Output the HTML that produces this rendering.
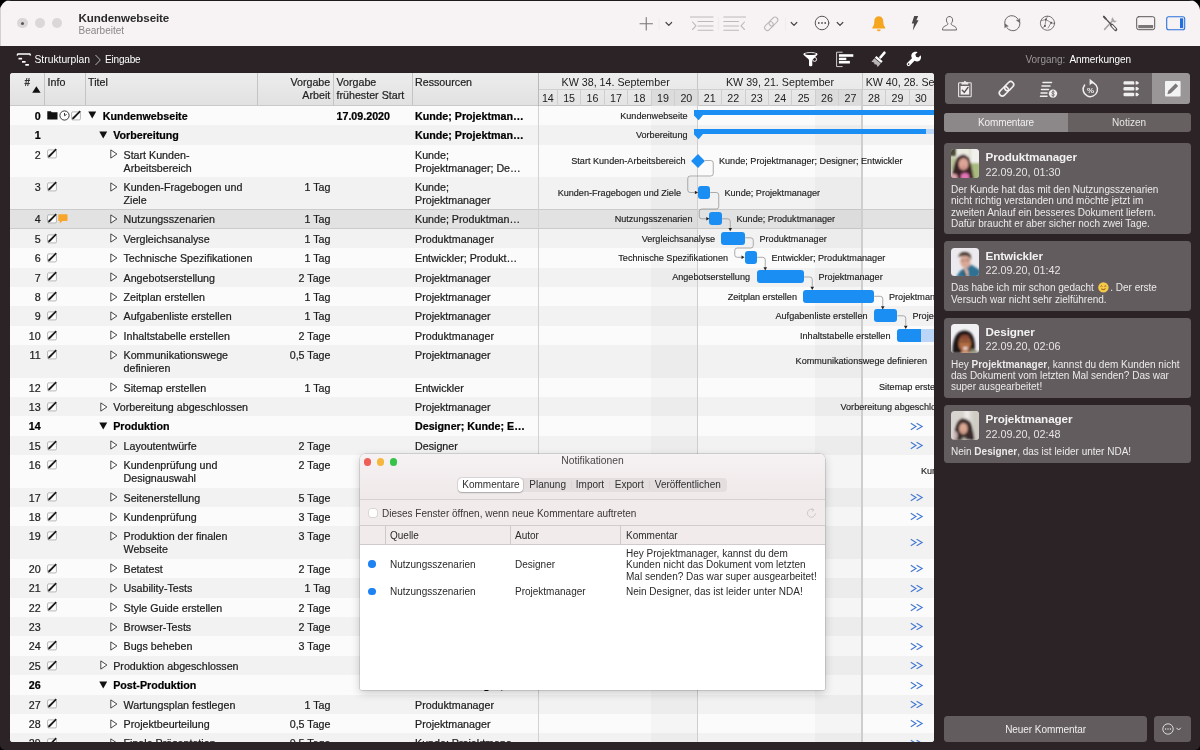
<!DOCTYPE html>
<html><head><meta charset="utf-8"><title>Kundenwebseite</title>
<style>
*{box-sizing:border-box;margin:0;padding:0}
html,body{width:1200px;height:750px;overflow:hidden;background:#000}
body{font-family:"Liberation Sans",sans-serif;position:relative}
.win{position:absolute;left:0;top:0;width:1200px;height:750px;border-radius:11px 11px 5px 5px;overflow:hidden;background:#2b2326;will-change:transform}
.titlebar{position:absolute;left:0;top:0;width:1200px;height:45.9px;background:#f7f2f3;box-shadow:inset 0 1px 0 #1c1a1b, inset 1px 0 0 #d4cfd0}
.tl{position:absolute;top:18.1px;width:10.4px;height:10.4px;border-radius:50%;background:#dbd6d7}
.wtitle{position:absolute;left:78.5px;top:11px;font-size:11.6px;font-weight:700;color:#2a2a2a;letter-spacing:-0.1px}
.wsub{position:absolute;left:78.5px;top:25px;font-size:10px;color:#8b8688}
.ab{position:absolute}
.darkbar{position:absolute;left:0;top:46px;width:1200px;height:27px;background:#2b2326;color:#fff;font-size:10.3px}
.darkbar span{position:absolute;top:7.7px;white-space:nowrap}
/* table */
.table{position:absolute;left:10px;top:73px;width:924.2px;height:668.8px;background:#fbfbfb;overflow:hidden;border-radius:3px}
.thead{position:absolute;left:0;top:0;width:528.75px;height:32.8px;background:linear-gradient(#ededed,#e1e1e1);border-bottom:1px solid #c9c9c9;font-size:10.7px;color:#222}
.thead span{position:absolute;-webkit-text-stroke:0.2px currentColor;top:3px;line-height:13px;white-space:nowrap}
.thead i{position:absolute;top:0;width:1px;height:32px;background:#c4c4c4}
.row{position:absolute;left:0;width:924px;font-size:10.7px;color:#1d1d1d;background:#fbfbfb}
.row.odd{background:#f2f2f2}
.row.sel{background:#e2e2e2;border-top:1px solid #cbcbcb;border-bottom:1px solid #cbcbcb}
.row.b{font-weight:700;color:#000}
.row span{position:absolute;top:4px;-webkit-text-stroke:0.22px currentColor;line-height:13px;white-space:nowrap}
.row.sel span{top:3px}
.row.sel .ic{margin-top:-1px}
.row .num{right:893.3px;text-align:right}
.row .wk{right:603.5px;text-align:right}
.row .st{left:326.5px}
.row .rs{left:405px}
.ic{position:absolute}
.gantt{position:absolute;left:528.75px;top:0;width:395.25px;height:669px;overflow:hidden}
.gsep{position:absolute;left:528.25px;top:0;width:1px;height:669px;background:linear-gradient(#b9b9b9 0,#b9b9b9 33px,#d2d2d2 33px)}
.wkd{position:absolute;top:32.8px;height:640px;background:rgba(0,0,0,0.024)}
.wkl{position:absolute;top:16px;height:660px;width:1.3px;background:#cecece}
.ghead{position:absolute;left:0;top:0;width:396px;height:32.8px;background:linear-gradient(#eeeeee,#e4e4e4);border-bottom:1px solid #c4c4c4}
.week{position:absolute;top:0;height:16px;font-size:10.7px;color:#222;text-align:center;line-height:18.3px;border-left:1px solid #c6c6c6;white-space:nowrap;overflow:hidden}
.day{position:absolute;top:16px;height:16.5px;font-size:10.7px;color:#222;text-align:center;line-height:17px;border-left:1px solid #cfcfcf;border-top:1px solid #cfcfcf}
.day.we{background:#dcdcdc}
.bar{position:absolute;height:13px;background:#1a8ef2;border-radius:3px}
.sb{position:absolute;height:5.3px;background:#1a8ef2}
.gl{position:absolute;-webkit-text-stroke:0.15px currentColor;font-size:9.1px;color:#1d1d1d;white-space:nowrap;line-height:12px}
/* right panel */
.panel{position:absolute;left:934px;top:73px;width:266px;height:677px;color:#fff}
.ibar{position:absolute;left:10.7px;top:0;width:245px;height:31px;background:#686264;border-radius:3.5px;overflow:hidden}
.ibar .selx{position:absolute;left:207.3px;top:0;width:39px;height:31px;background:#9a9697}
.tabs{position:absolute;left:10.3px;top:40px;width:246.4px;height:19px;background:#666061;border-radius:3px;overflow:hidden;font-size:10px;color:#e8e6e6}
.tabs div{position:absolute;top:0;height:19px;line-height:20.3px;text-align:center}
.card{position:absolute;left:10px;width:246.7px;background:#625c5e;border-radius:3.5px}
.card .nm{position:absolute;left:41.5px;top:7.4px;font-size:11.7px;font-weight:700;color:#f3f2f2;white-space:nowrap;letter-spacing:-0.1px}
.card .dt{position:absolute;left:41.5px;top:22.9px;font-size:10.8px;color:#e6e4e4;white-space:nowrap}
.card .bd{position:absolute;left:7px;top:41.1px;font-size:10px;color:#eceaea;white-space:nowrap}
.card .bd .l{height:11.4px;line-height:11.4px}
.card .av{position:absolute;left:6.9px;top:6.4px;width:28px;height:28.7px;border-radius:3.5px;overflow:hidden}
.card .av svg{display:block}
.btn{position:absolute;background:#625c5e;border-radius:3.5px;color:#f0eeee;font-size:10.3px;text-align:center}
/* notif window */
.nwin{position:absolute;left:360px;top:453.5px;width:465px;height:236px;background:#fff;border-radius:5px 5px 1.5px 1.5px;box-shadow:0 0 0 0.5px rgba(0,0,0,0.22),0 3px 10px rgba(0,0,0,0.2);overflow:hidden;font-size:10px;color:#2a2a2a}
.ntop{position:absolute;left:0;top:0;width:465px;height:46px;background:linear-gradient(#f6f1f2,#efe9ea);border-bottom:1px solid #d6d0d1}
.nchk{position:absolute;left:0;top:46px;width:465px;height:26px;background:#f1ebec;border-bottom:1px solid #d2cccd}
.nhd{position:absolute;left:0;top:72px;width:465px;height:19.4px;background:#f1ebec;border-bottom:1px solid #d0cacb}
.nhd span,.nrow span{position:absolute;white-space:nowrap}
.nhd i{position:absolute;top:0;width:1px;height:18.6px;background:#cfc9ca}
.seg{position:absolute;left:98.3px;top:24px;width:268.5px;height:14.3px;background:#e4dedf;border-radius:4px}
.seg span{position:absolute;top:0;line-height:14.6px;font-size:10px;color:#2f2f2f;white-space:nowrap}
.seg .on{position:absolute;left:0;top:0;width:65.2px;height:14.3px;background:#fff;border-radius:4px;box-shadow:0 0 0 0.5px rgba(0,0,0,0.12),0 0.5px 1.5px rgba(0,0,0,0.25)}
.nl{height:11.2px;line-height:11.2px}
.seg i{position:absolute;top:3px;width:1px;height:8.5px;background:#dad4d5}
</style></head><body>
<div class="win">
<!-- TITLE BAR -->
<div class="titlebar">
 <div class="tl" style="left:17.3px"></div><div class="tl" style="left:34.5px"></div><div class="tl" style="left:51.5px"></div>
 <div class="ab" style="left:20.9px;top:21.7px;width:3.2px;height:3.2px;border-radius:50%;background:#5a5657"></div>
 <div class="wtitle">Kundenwebseite</div>
 <div class="wsub">Bearbeitet</div>
 <svg class="ab" style="left:630px;top:8px" width="570" height="32" viewBox="630 8 570 32" fill="none" stroke-linecap="round" stroke-linejoin="round">
  <!-- plus -->
  <path d="M640 23.7 H652.5 M646.25 17.5 V30" stroke="#7a7677" stroke-width="1.1"/>
  <path d="M659 18 V30" stroke="#f0eaeb" stroke-width="1"/>
  <path d="M666 22.5 L668.8 25.3 L671.6 22.5" stroke="#4a4647" stroke-width="1.2"/>
  <!-- indent -->
  <g stroke="#bdb8b9" stroke-width="1.1">
   <path d="M690.5 17 H713 M698 21.5 H713 M698 26 H713 M698 30.3 H713 M692.5 22 L696 25.8 L692.5 29.5"/>
   <path d="M718.5 18 V30" stroke="#f0eaeb"/>
   <path d="M723.8 17 H745.5 M723.8 21.5 H738.5 M723.8 26 H738.5 M723.8 30.3 H738.5 M744.5 22 L741 25.8 L744.5 29.5"/>
  </g>
  <!-- link disabled -->
  <g stroke="#bdb8b9" stroke-width="1.1" transform="rotate(-45 771.2 23.8)">
   <rect x="763" y="21" width="10" height="5.6" rx="2.8"/>
   <rect x="769.4" y="21" width="10" height="5.6" rx="2.8"/>
  </g>
  <path d="M785.5 18 V30" stroke="#f0eaeb" stroke-width="1"/>
  <path d="M791.2 22.5 L794 25.3 L796.8 22.5" stroke="#4a4647" stroke-width="1.2"/>
  <!-- ellipsis circle -->
  <circle cx="822" cy="23" r="6.8" stroke="#5a5657" stroke-width="1"/>
  <circle cx="818.8" cy="23" r="0.9" fill="#5a5657" stroke="none"/><circle cx="822" cy="23" r="0.9" fill="#5a5657" stroke="none"/><circle cx="825.2" cy="23" r="0.9" fill="#5a5657" stroke="none"/>
  <path d="M837.2 22.5 L840 25.3 L842.8 22.5" stroke="#4a4647" stroke-width="1.2"/>
  <!-- bell -->
  <path d="M878.8 16.3 C875.2 16.3 874.3 19.5 874.3 22 C874.3 25.2 873.2 26.3 872.4 27.4 V28.4 H885.2 V27.4 C884.4 26.3 883.3 25.2 883.3 22 C883.3 19.5 882.4 16.3 878.8 16.3Z" fill="#f6a51f" stroke="none"/>
  <path d="M876.9 29.4 A1.9 1.9 0 0 0 880.7 29.4Z" fill="#f6a51f" stroke="none"/>
  <!-- bolt -->
  <path d="M914.2 16 H918.2 L916.4 20.3 H918.6 L912.8 30.4 L914 23.6 H911.8Z" fill="#4b4748" stroke="none"/>
  <!-- person -->
  <path d="M949.5 16.5 C947.4 16.5 946.4 18.1 946.4 19.9 C946.4 21.6 947.1 22.6 947.8 23.3 C948.2 24.6 946.9 25.3 945.4 25.9 C943.4 26.7 942.5 27.6 942.5 30 H956.5 C956.5 27.6 955.6 26.7 953.6 25.9 C952.1 25.3 950.8 24.6 951.2 23.3 C951.9 22.6 952.6 21.6 952.6 19.9 C952.6 18.1 951.6 16.5 949.5 16.5Z" stroke="#6a6667" stroke-width="1"/>
  <!-- sync -->
  <g stroke="#6a6667" stroke-width="1">
   <path d="M1017.6 18.5 A7.2 7.2 0 0 0 1005.2 25.6"/><path d="M1007 27.9 A7.2 7.2 0 0 0 1019.4 20.8"/>
   <path d="M1019.9 19 L1019.6 22.6 L1016.6 20.4Z" fill="#6a6667" stroke-width="0.5"/><path d="M1004.7 27.4 L1005 23.8 L1008 26Z" fill="#6a6667" stroke-width="0.5"/>
  </g>
  <!-- share -->
  <g stroke="#6a6667" stroke-width="0.9">
   <circle cx="1047.5" cy="23.2" r="7.1"/>
   <path d="M1045.9 19.6 L1051.2 22.7 M1045.9 19.6 L1044.9 26 M1045.9 19.6 L1047.6 16.3 M1051.2 22.7 L1054.4 23.6 M1051.2 22.7 L1048 28 M1044.9 26 L1042.4 28 M1045.9 19.6 L1041.2 20.6" stroke-width="0.7"/>
   <circle cx="1045.9" cy="19.6" r="1" fill="#5a5657" stroke="none"/><circle cx="1051.2" cy="22.7" r="1" fill="#5a5657" stroke="none"/><circle cx="1044.9" cy="26" r="1" fill="#5a5657" stroke="none"/>
  </g>
  <!-- tools -->
  <g>
   <path d="M1104.6 29.4 L1113.2 20" stroke="#a9a5a6" stroke-width="1.6"/>
   <path d="M1112.4 17.8 A2.5 2.5 0 1 0 1116.4 21.2 L1114.6 20.9 L1113.4 19.5 Z" fill="#a9a5a6" stroke="#a9a5a6" stroke-width="0.5"/>
   <path d="M1104.2 17 L1111.6 25" stroke="#555152" stroke-width="1.2"/>
   <path d="M1103.8 16.6 L1105.6 18.6" stroke="#555152" stroke-width="1.9"/>
   <path d="M1111.8 25.4 L1115.6 29.4" stroke="#555152" stroke-width="3.4"/>
   <path d="M1112.2 25.8 L1115.2 29" stroke="#f7f2f3" stroke-width="1.5"/>
  </g>
  <!-- panel bottom -->
  <rect x="1136.7" y="16.7" width="18" height="13" rx="2" stroke="#5a5657" stroke-width="1"/>
  <rect x="1138.3" y="25" width="14.8" height="3.2" fill="#7a7677" stroke="none"/>
  <!-- panel right blue -->
  <rect x="1166.7" y="16.7" width="18" height="13" rx="2" stroke="#2a72dc" stroke-width="1.1"/>
  <rect x="1180" y="18.3" width="3.2" height="9.8" fill="#1f6fe0" stroke="none"/>
 </svg>
</div>
<!-- DARK BAR -->
<div class="darkbar">
 <svg class="ab" style="left:16px;top:5px" width="16" height="16" viewBox="16 51 16 16"><path d="M17.2 55.6 L17.8 53.9 H29.9 L30.5 55.6" fill="none" stroke="#fff" stroke-width="1.5" stroke-linejoin="round"/><rect x="18.5" y="57.8" width="3.6" height="1.7" fill="#fff"/><rect x="22" y="61" width="3.6" height="1.7" fill="#fff"/><rect x="25.3" y="64" width="3.6" height="1.7" fill="#fff"/></svg>
 <span style="left:34.5px">Strukturplan</span>
 <svg class="ab" style="left:94px;top:8px" width="8" height="12" viewBox="0 0 8 12"><path d="M1.5 1 L6.3 6 L1.5 11" fill="none" stroke="#b9b4b6" stroke-width="1"/></svg>
 <span style="left:105px;font-size:10px;letter-spacing:-0.17px">Eingabe</span>
 <svg class="ab" style="left:800px;top:4px" width="130" height="20" viewBox="800 50 130 20">
  <!-- funnel -->
  <path d="M803.4 54.2 C803.4 51.6 817.6 51.6 817.6 54.2 C817.6 55.6 812.3 58.6 812.3 60.2 V65.2 C812.3 66.6 809 66.6 809 65.2 V60.2 C809 58.6 803.4 55.6 803.4 54.2Z" fill="#fff"/>
  <ellipse cx="810.5" cy="54" rx="5.4" ry="1.1" fill="#2b2326"/>
  <circle cx="814.6" cy="59.4" r="2" fill="none" stroke="#fff" stroke-width="0.9"/>
  <!-- align -->
  <path d="M842.6 52.2 H836.6 V66.6 H842.6" fill="none" stroke="#e4e2e2" stroke-width="0.9"/>
  <rect x="838.9" y="54.2" width="14.4" height="2.6" fill="#fff"/><rect x="838.9" y="57.7" width="7.4" height="2.4" fill="#fff"/><rect x="838.9" y="60.9" width="11" height="2.6" fill="#fff"/>
  <!-- brush -->
  <g transform="rotate(40 879 59)"><rect x="877.8" y="49.5" width="2.6" height="8.5" rx="1" fill="#fff"/><rect x="875" y="58.3" width="8.2" height="2.4" fill="#fff"/><path d="M875 61.3 H883.2 V66 L880.5 64.8 L879 66 L877.4 64.8 L875 66Z" fill="#b9b4b6"/></g>
  <!-- wrench -->
  <g transform="rotate(45 913.8 59)"><path d="M911.6 51.5 V54.6 L913.8 55.8 L916 54.6 V51.5 C918.2 52.4 919 54.3 919 55.8 C919 57.8 917.6 59.2 915.6 59.8 V66.6 C915.6 68.8 912 68.8 912 66.6 V59.8 C910 59.2 908.6 57.8 908.6 55.8 C908.6 54.3 909.4 52.4 911.6 51.5Z" fill="#fff"/><circle cx="913.8" cy="66.3" r="0.8" fill="#2b2326"/></g>
 </svg>
 <span style="left:1025.5px;color:#9b9698;top:8px;font-size:10px;letter-spacing:-0.04px">Vorgang:</span>
 <span style="left:1069.5px;top:8px;font-size:10px;letter-spacing:-0.07px">Anmerkungen</span>
</div>
<!-- TABLE -->
<div class="table">
 <div class="row b" style="top:32.8px;height:19.4px"><span class="num">0</span><svg class="ic" style="left:37.0px;top:4.5px" width="11" height="10" viewBox="0 0 11 10"><path d="M0.3 1.2 h3.6 l0.9 1 h5.7 v7.3 h-10.2z" fill="#111"/></svg><svg class="ic" style="left:49.0px;top:4.0px" width="11" height="11" viewBox="0 0 11 11"><circle cx="5.5" cy="5.5" r="4.6" fill="#fff" stroke="#222" stroke-width="0.9"/><path d="M5.5 5.7 L5.5 3 M5.5 5.7 L7.6 4.4" stroke="#222" stroke-width="0.9" fill="none"/></svg><svg class="ic" style="left:61.2px;top:3.9px" width="11" height="11" viewBox="0 0 11 11"><rect x="0.6" y="1.9" width="8.8" height="8" rx="1.1" fill="#fdfdfd" stroke="#9a9a9a" stroke-width="0.7"/><path d="M1 9.5 L1.5 7.6 L8.7 0.6 L9.8 1.7 L2.9 8.9 Z" fill="#1a1a1a"/></svg><svg class="ic" style="left:78px;top:5.5px" width="9" height="8" viewBox="0 0 9 8"><path d="M0.3 0.5 H8.2 L4.25 7.5Z" fill="#111"/></svg><span class="tt" style="left:92.7px">Kundenwebseite</span><span class="st">17.09.2020</span><span class="rs">Kunde; Projektman…</span></div>
<div class="row odd b" style="top:52.2px;height:19.4px"><span class="num">1</span><svg class="ic" style="left:89.2px;top:5.5px" width="9" height="8" viewBox="0 0 9 8"><path d="M0.3 0.5 H8.2 L4.25 7.5Z" fill="#111"/></svg><span class="tt" style="left:103.2px">Vorbereitung</span><span class="rs">Kunde; Projektman…</span></div>
<div class="row" style="top:71.6px;height:32.4px"><span class="num">2</span><svg class="ic" style="left:37.3px;top:3.9px" width="11" height="11" viewBox="0 0 11 11"><rect x="0.6" y="1.9" width="8.8" height="8" rx="1.1" fill="#fdfdfd" stroke="#9a9a9a" stroke-width="0.7"/><path d="M1 9.5 L1.5 7.6 L8.7 0.6 L9.8 1.7 L2.9 8.9 Z" fill="#1a1a1a"/></svg><svg class="ic" style="left:100.0px;top:4.5px" width="8" height="10" viewBox="0 0 8 10"><path d="M0.8 0.9 L6.9 5 L0.8 9.1Z" fill="#fff" stroke="#333" stroke-width="0.9" stroke-linejoin="round"/></svg><span class="tt" style="left:113.5px">Start Kunden-<br>Arbeitsbereich</span><span class="rs">Kunde;<br>Projektmanager; De…</span></div>
<div class="row odd" style="top:104.0px;height:32.4px"><span class="num">3</span><svg class="ic" style="left:37.3px;top:3.9px" width="11" height="11" viewBox="0 0 11 11"><rect x="0.6" y="1.9" width="8.8" height="8" rx="1.1" fill="#fdfdfd" stroke="#9a9a9a" stroke-width="0.7"/><path d="M1 9.5 L1.5 7.6 L8.7 0.6 L9.8 1.7 L2.9 8.9 Z" fill="#1a1a1a"/></svg><svg class="ic" style="left:100.0px;top:4.5px" width="8" height="10" viewBox="0 0 8 10"><path d="M0.8 0.9 L6.9 5 L0.8 9.1Z" fill="#fff" stroke="#333" stroke-width="0.9" stroke-linejoin="round"/></svg><span class="tt" style="left:113.5px">Kunden-Fragebogen und<br>Ziele</span><span class="wk">1 Tag</span><span class="rs">Kunde;<br>Projektmanager</span></div>
<div class="row sel" style="top:136.4px;height:19.4px"><span class="num">4</span><svg class="ic" style="left:37.3px;top:3.9px" width="11" height="11" viewBox="0 0 11 11"><rect x="0.6" y="1.9" width="8.8" height="8" rx="1.1" fill="#fdfdfd" stroke="#9a9a9a" stroke-width="0.7"/><path d="M1 9.5 L1.5 7.6 L8.7 0.6 L9.8 1.7 L2.9 8.9 Z" fill="#1a1a1a"/></svg><svg class="ic" style="left:48.099999999999994px;top:4.2px" width="10" height="10" viewBox="0 0 10 10"><path d="M1 0.3 h7.8 q0.7 0 0.7 0.7 v5.4 q0 0.7 -0.7 0.7 h-4.4 l-2.6 2.5 v-2.5 h-0.8 q-0.7 0 -0.7 -0.7 v-5.4 q0 -0.7 0.7 -0.7z" fill="#f7a62b"/></svg><svg class="ic" style="left:100.0px;top:4.5px" width="8" height="10" viewBox="0 0 8 10"><path d="M0.8 0.9 L6.9 5 L0.8 9.1Z" fill="#fff" stroke="#333" stroke-width="0.9" stroke-linejoin="round"/></svg><span class="tt" style="left:113.5px">Nutzungsszenarien</span><span class="wk">1 Tag</span><span class="rs">Kunde; Produktman…</span></div>
<div class="row odd" style="top:155.8px;height:19.4px"><span class="num">5</span><svg class="ic" style="left:37.3px;top:3.9px" width="11" height="11" viewBox="0 0 11 11"><rect x="0.6" y="1.9" width="8.8" height="8" rx="1.1" fill="#fdfdfd" stroke="#9a9a9a" stroke-width="0.7"/><path d="M1 9.5 L1.5 7.6 L8.7 0.6 L9.8 1.7 L2.9 8.9 Z" fill="#1a1a1a"/></svg><svg class="ic" style="left:100.0px;top:4.5px" width="8" height="10" viewBox="0 0 8 10"><path d="M0.8 0.9 L6.9 5 L0.8 9.1Z" fill="#fff" stroke="#333" stroke-width="0.9" stroke-linejoin="round"/></svg><span class="tt" style="left:113.5px">Vergleichsanalyse</span><span class="wk">1 Tag</span><span class="rs">Produktmanager</span></div>
<div class="row" style="top:175.2px;height:19.4px"><span class="num">6</span><svg class="ic" style="left:37.3px;top:3.9px" width="11" height="11" viewBox="0 0 11 11"><rect x="0.6" y="1.9" width="8.8" height="8" rx="1.1" fill="#fdfdfd" stroke="#9a9a9a" stroke-width="0.7"/><path d="M1 9.5 L1.5 7.6 L8.7 0.6 L9.8 1.7 L2.9 8.9 Z" fill="#1a1a1a"/></svg><svg class="ic" style="left:100.0px;top:4.5px" width="8" height="10" viewBox="0 0 8 10"><path d="M0.8 0.9 L6.9 5 L0.8 9.1Z" fill="#fff" stroke="#333" stroke-width="0.9" stroke-linejoin="round"/></svg><span class="tt" style="left:113.5px">Technische Spezifikationen</span><span class="wk">1 Tag</span><span class="rs">Entwickler; Produkt…</span></div>
<div class="row odd" style="top:194.6px;height:19.4px"><span class="num">7</span><svg class="ic" style="left:37.3px;top:3.9px" width="11" height="11" viewBox="0 0 11 11"><rect x="0.6" y="1.9" width="8.8" height="8" rx="1.1" fill="#fdfdfd" stroke="#9a9a9a" stroke-width="0.7"/><path d="M1 9.5 L1.5 7.6 L8.7 0.6 L9.8 1.7 L2.9 8.9 Z" fill="#1a1a1a"/></svg><svg class="ic" style="left:100.0px;top:4.5px" width="8" height="10" viewBox="0 0 8 10"><path d="M0.8 0.9 L6.9 5 L0.8 9.1Z" fill="#fff" stroke="#333" stroke-width="0.9" stroke-linejoin="round"/></svg><span class="tt" style="left:113.5px">Angebotserstellung</span><span class="wk">2 Tage</span><span class="rs">Projektmanager</span></div>
<div class="row" style="top:214.0px;height:19.4px"><span class="num">8</span><svg class="ic" style="left:37.3px;top:3.9px" width="11" height="11" viewBox="0 0 11 11"><rect x="0.6" y="1.9" width="8.8" height="8" rx="1.1" fill="#fdfdfd" stroke="#9a9a9a" stroke-width="0.7"/><path d="M1 9.5 L1.5 7.6 L8.7 0.6 L9.8 1.7 L2.9 8.9 Z" fill="#1a1a1a"/></svg><svg class="ic" style="left:100.0px;top:4.5px" width="8" height="10" viewBox="0 0 8 10"><path d="M0.8 0.9 L6.9 5 L0.8 9.1Z" fill="#fff" stroke="#333" stroke-width="0.9" stroke-linejoin="round"/></svg><span class="tt" style="left:113.5px">Zeitplan erstellen</span><span class="wk">1 Tag</span><span class="rs">Projektmanager</span></div>
<div class="row odd" style="top:233.4px;height:19.4px"><span class="num">9</span><svg class="ic" style="left:37.3px;top:3.9px" width="11" height="11" viewBox="0 0 11 11"><rect x="0.6" y="1.9" width="8.8" height="8" rx="1.1" fill="#fdfdfd" stroke="#9a9a9a" stroke-width="0.7"/><path d="M1 9.5 L1.5 7.6 L8.7 0.6 L9.8 1.7 L2.9 8.9 Z" fill="#1a1a1a"/></svg><svg class="ic" style="left:100.0px;top:4.5px" width="8" height="10" viewBox="0 0 8 10"><path d="M0.8 0.9 L6.9 5 L0.8 9.1Z" fill="#fff" stroke="#333" stroke-width="0.9" stroke-linejoin="round"/></svg><span class="tt" style="left:113.5px">Aufgabenliste erstellen</span><span class="wk">1 Tag</span><span class="rs">Projektmanager</span></div>
<div class="row" style="top:252.8px;height:19.4px"><span class="num">10</span><svg class="ic" style="left:37.3px;top:3.9px" width="11" height="11" viewBox="0 0 11 11"><rect x="0.6" y="1.9" width="8.8" height="8" rx="1.1" fill="#fdfdfd" stroke="#9a9a9a" stroke-width="0.7"/><path d="M1 9.5 L1.5 7.6 L8.7 0.6 L9.8 1.7 L2.9 8.9 Z" fill="#1a1a1a"/></svg><svg class="ic" style="left:100.0px;top:4.5px" width="8" height="10" viewBox="0 0 8 10"><path d="M0.8 0.9 L6.9 5 L0.8 9.1Z" fill="#fff" stroke="#333" stroke-width="0.9" stroke-linejoin="round"/></svg><span class="tt" style="left:113.5px">Inhaltstabelle erstellen</span><span class="wk">2 Tage</span><span class="rs">Produktmanager</span></div>
<div class="row odd" style="top:272.2px;height:32.4px"><span class="num">11</span><svg class="ic" style="left:37.3px;top:3.9px" width="11" height="11" viewBox="0 0 11 11"><rect x="0.6" y="1.9" width="8.8" height="8" rx="1.1" fill="#fdfdfd" stroke="#9a9a9a" stroke-width="0.7"/><path d="M1 9.5 L1.5 7.6 L8.7 0.6 L9.8 1.7 L2.9 8.9 Z" fill="#1a1a1a"/></svg><svg class="ic" style="left:100.0px;top:4.5px" width="8" height="10" viewBox="0 0 8 10"><path d="M0.8 0.9 L6.9 5 L0.8 9.1Z" fill="#fff" stroke="#333" stroke-width="0.9" stroke-linejoin="round"/></svg><span class="tt" style="left:113.5px">Kommunikationswege<br>definieren</span><span class="wk">0,5 Tage</span><span class="rs">Projektmanager</span></div>
<div class="row" style="top:304.6px;height:19.4px"><span class="num">12</span><svg class="ic" style="left:37.3px;top:3.9px" width="11" height="11" viewBox="0 0 11 11"><rect x="0.6" y="1.9" width="8.8" height="8" rx="1.1" fill="#fdfdfd" stroke="#9a9a9a" stroke-width="0.7"/><path d="M1 9.5 L1.5 7.6 L8.7 0.6 L9.8 1.7 L2.9 8.9 Z" fill="#1a1a1a"/></svg><svg class="ic" style="left:100.0px;top:4.5px" width="8" height="10" viewBox="0 0 8 10"><path d="M0.8 0.9 L6.9 5 L0.8 9.1Z" fill="#fff" stroke="#333" stroke-width="0.9" stroke-linejoin="round"/></svg><span class="tt" style="left:113.5px">Sitemap erstellen</span><span class="wk">1 Tag</span><span class="rs">Entwickler</span></div>
<div class="row odd" style="top:324.0px;height:19.4px"><span class="num">13</span><svg class="ic" style="left:37.3px;top:3.9px" width="11" height="11" viewBox="0 0 11 11"><rect x="0.6" y="1.9" width="8.8" height="8" rx="1.1" fill="#fdfdfd" stroke="#9a9a9a" stroke-width="0.7"/><path d="M1 9.5 L1.5 7.6 L8.7 0.6 L9.8 1.7 L2.9 8.9 Z" fill="#1a1a1a"/></svg><svg class="ic" style="left:89.7px;top:4.5px" width="8" height="10" viewBox="0 0 8 10"><path d="M0.8 0.9 L6.9 5 L0.8 9.1Z" fill="#fff" stroke="#333" stroke-width="0.9" stroke-linejoin="round"/></svg><span class="tt" style="left:103.2px">Vorbereitung abgeschlossen</span><span class="rs">Projektmanager</span></div>
<div class="row b" style="top:343.4px;height:19.4px"><span class="num">14</span><svg class="ic" style="left:89.2px;top:5.5px" width="9" height="8" viewBox="0 0 9 8"><path d="M0.3 0.5 H8.2 L4.25 7.5Z" fill="#111"/></svg><span class="tt" style="left:103.2px">Produktion</span><span class="rs">Designer; Kunde; E…</span></div>
<div class="row odd" style="top:362.8px;height:19.4px"><span class="num">15</span><svg class="ic" style="left:37.3px;top:3.9px" width="11" height="11" viewBox="0 0 11 11"><rect x="0.6" y="1.9" width="8.8" height="8" rx="1.1" fill="#fdfdfd" stroke="#9a9a9a" stroke-width="0.7"/><path d="M1 9.5 L1.5 7.6 L8.7 0.6 L9.8 1.7 L2.9 8.9 Z" fill="#1a1a1a"/></svg><svg class="ic" style="left:100.0px;top:4.5px" width="8" height="10" viewBox="0 0 8 10"><path d="M0.8 0.9 L6.9 5 L0.8 9.1Z" fill="#fff" stroke="#333" stroke-width="0.9" stroke-linejoin="round"/></svg><span class="tt" style="left:113.5px">Layoutentwürfe</span><span class="wk">2 Tage</span><span class="rs">Designer</span></div>
<div class="row" style="top:382.2px;height:32.4px"><span class="num">16</span><svg class="ic" style="left:37.3px;top:3.9px" width="11" height="11" viewBox="0 0 11 11"><rect x="0.6" y="1.9" width="8.8" height="8" rx="1.1" fill="#fdfdfd" stroke="#9a9a9a" stroke-width="0.7"/><path d="M1 9.5 L1.5 7.6 L8.7 0.6 L9.8 1.7 L2.9 8.9 Z" fill="#1a1a1a"/></svg><svg class="ic" style="left:100.0px;top:4.5px" width="8" height="10" viewBox="0 0 8 10"><path d="M0.8 0.9 L6.9 5 L0.8 9.1Z" fill="#fff" stroke="#333" stroke-width="0.9" stroke-linejoin="round"/></svg><span class="tt" style="left:113.5px">Kundenprüfung und<br>Designauswahl</span><span class="wk">2 Tage</span><span class="rs">Kunde</span></div>
<div class="row odd" style="top:414.6px;height:19.4px"><span class="num">17</span><svg class="ic" style="left:37.3px;top:3.9px" width="11" height="11" viewBox="0 0 11 11"><rect x="0.6" y="1.9" width="8.8" height="8" rx="1.1" fill="#fdfdfd" stroke="#9a9a9a" stroke-width="0.7"/><path d="M1 9.5 L1.5 7.6 L8.7 0.6 L9.8 1.7 L2.9 8.9 Z" fill="#1a1a1a"/></svg><svg class="ic" style="left:100.0px;top:4.5px" width="8" height="10" viewBox="0 0 8 10"><path d="M0.8 0.9 L6.9 5 L0.8 9.1Z" fill="#fff" stroke="#333" stroke-width="0.9" stroke-linejoin="round"/></svg><span class="tt" style="left:113.5px">Seitenerstellung</span><span class="wk">5 Tage</span><span class="rs">Entwickler</span></div>
<div class="row" style="top:434.0px;height:19.4px"><span class="num">18</span><svg class="ic" style="left:37.3px;top:3.9px" width="11" height="11" viewBox="0 0 11 11"><rect x="0.6" y="1.9" width="8.8" height="8" rx="1.1" fill="#fdfdfd" stroke="#9a9a9a" stroke-width="0.7"/><path d="M1 9.5 L1.5 7.6 L8.7 0.6 L9.8 1.7 L2.9 8.9 Z" fill="#1a1a1a"/></svg><svg class="ic" style="left:100.0px;top:4.5px" width="8" height="10" viewBox="0 0 8 10"><path d="M0.8 0.9 L6.9 5 L0.8 9.1Z" fill="#fff" stroke="#333" stroke-width="0.9" stroke-linejoin="round"/></svg><span class="tt" style="left:113.5px">Kundenprüfung</span><span class="wk">3 Tage</span><span class="rs">Kunde</span></div>
<div class="row odd" style="top:453.4px;height:32.4px"><span class="num">19</span><svg class="ic" style="left:37.3px;top:3.9px" width="11" height="11" viewBox="0 0 11 11"><rect x="0.6" y="1.9" width="8.8" height="8" rx="1.1" fill="#fdfdfd" stroke="#9a9a9a" stroke-width="0.7"/><path d="M1 9.5 L1.5 7.6 L8.7 0.6 L9.8 1.7 L2.9 8.9 Z" fill="#1a1a1a"/></svg><svg class="ic" style="left:100.0px;top:4.5px" width="8" height="10" viewBox="0 0 8 10"><path d="M0.8 0.9 L6.9 5 L0.8 9.1Z" fill="#fff" stroke="#333" stroke-width="0.9" stroke-linejoin="round"/></svg><span class="tt" style="left:113.5px">Produktion der finalen<br>Webseite</span><span class="wk">3 Tage</span><span class="rs">Entwickler</span></div>
<div class="row" style="top:485.8px;height:19.4px"><span class="num">20</span><svg class="ic" style="left:37.3px;top:3.9px" width="11" height="11" viewBox="0 0 11 11"><rect x="0.6" y="1.9" width="8.8" height="8" rx="1.1" fill="#fdfdfd" stroke="#9a9a9a" stroke-width="0.7"/><path d="M1 9.5 L1.5 7.6 L8.7 0.6 L9.8 1.7 L2.9 8.9 Z" fill="#1a1a1a"/></svg><svg class="ic" style="left:100.0px;top:4.5px" width="8" height="10" viewBox="0 0 8 10"><path d="M0.8 0.9 L6.9 5 L0.8 9.1Z" fill="#fff" stroke="#333" stroke-width="0.9" stroke-linejoin="round"/></svg><span class="tt" style="left:113.5px">Betatest</span><span class="wk">2 Tage</span><span class="rs">Kunde; Produktman…</span></div>
<div class="row odd" style="top:505.2px;height:19.4px"><span class="num">21</span><svg class="ic" style="left:37.3px;top:3.9px" width="11" height="11" viewBox="0 0 11 11"><rect x="0.6" y="1.9" width="8.8" height="8" rx="1.1" fill="#fdfdfd" stroke="#9a9a9a" stroke-width="0.7"/><path d="M1 9.5 L1.5 7.6 L8.7 0.6 L9.8 1.7 L2.9 8.9 Z" fill="#1a1a1a"/></svg><svg class="ic" style="left:100.0px;top:4.5px" width="8" height="10" viewBox="0 0 8 10"><path d="M0.8 0.9 L6.9 5 L0.8 9.1Z" fill="#fff" stroke="#333" stroke-width="0.9" stroke-linejoin="round"/></svg><span class="tt" style="left:113.5px">Usability-Tests</span><span class="wk">1 Tag</span><span class="rs">Produktmanager</span></div>
<div class="row" style="top:524.6px;height:19.4px"><span class="num">22</span><svg class="ic" style="left:37.3px;top:3.9px" width="11" height="11" viewBox="0 0 11 11"><rect x="0.6" y="1.9" width="8.8" height="8" rx="1.1" fill="#fdfdfd" stroke="#9a9a9a" stroke-width="0.7"/><path d="M1 9.5 L1.5 7.6 L8.7 0.6 L9.8 1.7 L2.9 8.9 Z" fill="#1a1a1a"/></svg><svg class="ic" style="left:100.0px;top:4.5px" width="8" height="10" viewBox="0 0 8 10"><path d="M0.8 0.9 L6.9 5 L0.8 9.1Z" fill="#fff" stroke="#333" stroke-width="0.9" stroke-linejoin="round"/></svg><span class="tt" style="left:113.5px">Style Guide erstellen</span><span class="wk">2 Tage</span><span class="rs">Designer</span></div>
<div class="row odd" style="top:544.0px;height:19.4px"><span class="num">23</span><svg class="ic" style="left:100.0px;top:4.5px" width="8" height="10" viewBox="0 0 8 10"><path d="M0.8 0.9 L6.9 5 L0.8 9.1Z" fill="#fff" stroke="#333" stroke-width="0.9" stroke-linejoin="round"/></svg><span class="tt" style="left:113.5px">Browser-Tests</span><span class="wk">2 Tage</span><span class="rs">Entwickler</span></div>
<div class="row" style="top:563.4px;height:19.4px"><span class="num">24</span><svg class="ic" style="left:37.3px;top:3.9px" width="11" height="11" viewBox="0 0 11 11"><rect x="0.6" y="1.9" width="8.8" height="8" rx="1.1" fill="#fdfdfd" stroke="#9a9a9a" stroke-width="0.7"/><path d="M1 9.5 L1.5 7.6 L8.7 0.6 L9.8 1.7 L2.9 8.9 Z" fill="#1a1a1a"/></svg><svg class="ic" style="left:100.0px;top:4.5px" width="8" height="10" viewBox="0 0 8 10"><path d="M0.8 0.9 L6.9 5 L0.8 9.1Z" fill="#fff" stroke="#333" stroke-width="0.9" stroke-linejoin="round"/></svg><span class="tt" style="left:113.5px">Bugs beheben</span><span class="wk">3 Tage</span><span class="rs">Entwickler</span></div>
<div class="row odd" style="top:582.8px;height:19.4px"><span class="num">25</span><svg class="ic" style="left:37.3px;top:3.9px" width="11" height="11" viewBox="0 0 11 11"><rect x="0.6" y="1.9" width="8.8" height="8" rx="1.1" fill="#fdfdfd" stroke="#9a9a9a" stroke-width="0.7"/><path d="M1 9.5 L1.5 7.6 L8.7 0.6 L9.8 1.7 L2.9 8.9 Z" fill="#1a1a1a"/></svg><svg class="ic" style="left:89.7px;top:4.5px" width="8" height="10" viewBox="0 0 8 10"><path d="M0.8 0.9 L6.9 5 L0.8 9.1Z" fill="#fff" stroke="#333" stroke-width="0.9" stroke-linejoin="round"/></svg><span class="tt" style="left:103.2px">Produktion abgeschlossen</span><span class="rs">Projektmanager</span></div>
<div class="row b" style="top:602.2px;height:19.4px"><span class="num">26</span><svg class="ic" style="left:89.2px;top:5.5px" width="9" height="8" viewBox="0 0 9 8"><path d="M0.3 0.5 H8.2 L4.25 7.5Z" fill="#111"/></svg><span class="tt" style="left:103.2px">Post-Produktion</span><span class="rs">Produktmanager; P…</span></div>
<div class="row odd" style="top:621.6px;height:19.4px"><span class="num">27</span><svg class="ic" style="left:37.3px;top:3.9px" width="11" height="11" viewBox="0 0 11 11"><rect x="0.6" y="1.9" width="8.8" height="8" rx="1.1" fill="#fdfdfd" stroke="#9a9a9a" stroke-width="0.7"/><path d="M1 9.5 L1.5 7.6 L8.7 0.6 L9.8 1.7 L2.9 8.9 Z" fill="#1a1a1a"/></svg><svg class="ic" style="left:100.0px;top:4.5px" width="8" height="10" viewBox="0 0 8 10"><path d="M0.8 0.9 L6.9 5 L0.8 9.1Z" fill="#fff" stroke="#333" stroke-width="0.9" stroke-linejoin="round"/></svg><span class="tt" style="left:113.5px">Wartungsplan festlegen</span><span class="wk">1 Tag</span><span class="rs">Produktmanager</span></div>
<div class="row" style="top:641.0px;height:19.4px"><span class="num">28</span><svg class="ic" style="left:37.3px;top:3.9px" width="11" height="11" viewBox="0 0 11 11"><rect x="0.6" y="1.9" width="8.8" height="8" rx="1.1" fill="#fdfdfd" stroke="#9a9a9a" stroke-width="0.7"/><path d="M1 9.5 L1.5 7.6 L8.7 0.6 L9.8 1.7 L2.9 8.9 Z" fill="#1a1a1a"/></svg><svg class="ic" style="left:100.0px;top:4.5px" width="8" height="10" viewBox="0 0 8 10"><path d="M0.8 0.9 L6.9 5 L0.8 9.1Z" fill="#fff" stroke="#333" stroke-width="0.9" stroke-linejoin="round"/></svg><span class="tt" style="left:113.5px">Projektbeurteilung</span><span class="wk">0,5 Tage</span><span class="rs">Projektmanager</span></div>
<div class="row odd" style="top:660.4px;height:19.4px"><span class="num">29</span><svg class="ic" style="left:37.3px;top:3.9px" width="11" height="11" viewBox="0 0 11 11"><rect x="0.6" y="1.9" width="8.8" height="8" rx="1.1" fill="#fdfdfd" stroke="#9a9a9a" stroke-width="0.7"/><path d="M1 9.5 L1.5 7.6 L8.7 0.6 L9.8 1.7 L2.9 8.9 Z" fill="#1a1a1a"/></svg><svg class="ic" style="left:100.0px;top:4.5px" width="8" height="10" viewBox="0 0 8 10"><path d="M0.8 0.9 L6.9 5 L0.8 9.1Z" fill="#fff" stroke="#333" stroke-width="0.9" stroke-linejoin="round"/></svg><span class="tt" style="left:113.5px">Finale Präsentation</span><span class="wk">0,5 Tage</span><span class="rs">Kunde; Projektmana…</span></div>
 <div class="thead">
  <span style="left:14.5px;font-size:10px;font-weight:700;color:#333">#</span>
  <svg class="ab" style="left:22px;top:13.4px" width="9" height="7" viewBox="0 0 9 7"><path d="M4.4 0.3 L8.6 6.7 H0.2Z" fill="#111"/></svg>
  <i style="left:34px"></i><span style="left:37.5px">Info</span>
  <i style="left:75px"></i><span style="left:78px">Titel</span>
  <i style="left:247px"></i><span style="right:208.5px;text-align:right">Vorgabe<br>Arbeit</span>
  <i style="left:323px"></i><span style="left:326.5px">Vorgabe<br>frühester Start</span>
  <i style="left:401.5px"></i><span style="left:405px">Ressourcen</span>
 </div>
 <div class="gantt">
  <div class="ghead">
   <div class="week" style="left:-5.2px;width:164.2px;border-left:0">KW 38, 14. September</div>
   <div class="week" style="left:158.7px;width:164.2px">KW 39, 21. September</div>
   <div class="week" style="left:322.9px;width:164.2px;text-align:left;padding-left:3px">KW 40, 28. September</div>
   <div class="day" style="left:0;width:18.15px;border-left:0">14</div><div class="day" style="left:18.15px;width:23.45px">15</div><div class="day" style="left:41.60px;width:23.45px">16</div><div class="day" style="left:65.05px;width:23.45px">17</div><div class="day" style="left:88.50px;width:23.45px">18</div><div class="day we" style="left:111.95px;width:23.45px">19</div><div class="day we" style="left:135.40px;width:23.45px">20</div><div class="day" style="left:158.85px;width:23.45px">21</div><div class="day" style="left:182.30px;width:23.45px">22</div><div class="day" style="left:205.75px;width:23.45px">23</div><div class="day" style="left:229.20px;width:23.45px">24</div><div class="day" style="left:252.65px;width:23.45px">25</div><div class="day we" style="left:276.10px;width:23.45px">26</div><div class="day we" style="left:299.55px;width:23.45px">27</div><div class="day" style="left:323.00px;width:23.45px">28</div><div class="day" style="left:346.45px;width:23.45px">29</div><div class="day" style="left:369.90px;width:23.45px">30</div>
  </div>
  <div class="wkd" style="left:112.00px;width:47.00px"></div>
<div class="wkd" style="left:276.25px;width:47.00px"></div>
<div class="wkl" style="left:158.30px"></div>
<div class="wkl" style="left:322.55px"></div>
<div class="sb" style="left:155.05px;top:36.80px;width:241.20px"></div>
<svg class="ab" style="left:154.85px;top:36.80px" width="11" height="11" viewBox="0 0 11 11"><path d="M0 2 Q0 0 2 0 H10 V5 H9 L4.6 10.2 L0 5.4Z" fill="#1a8ef2"/></svg>
<div class="sb" style="left:155.05px;top:56.20px;width:241.20px;background:#bcd6f7"></div>
<div class="sb" style="left:155.05px;top:56.20px;width:232.40px"></div>
<svg class="ab" style="left:154.85px;top:56.20px" width="11" height="11" viewBox="0 0 11 11"><path d="M0 2 Q0 0 2 0 H10 V5 H9 L4.6 10.2 L0 5.4Z" fill="#1a8ef2"/></svg>
<span class="gl" style="right:246.50px;top:36.50px">Kundenwebseite</span>
<span class="gl" style="right:246.50px;top:55.90px">Vorbereitung</span>
<svg class="ab" style="left:151.95px;top:80.50px" width="14" height="14" viewBox="0 0 14 14"><path d="M7 0.1 L13.9 7 L7 13.9 L0.1 7Z" fill="#1a8ef2"/></svg>
<span class="gl" style="right:248.50px;top:81.80px">Start Kunden-Arbeitsbereich</span>
<span class="gl" style="left:180.25px;top:81.80px">Kunde; Projektmanager; Designer; Entwickler</span>
<div class="bar" style="left:159.25px;top:113.25px;width:12.00px"></div>
<span class="gl" style="right:253.00px;top:114.20px">Kunden-Fragebogen und Ziele</span>
<span class="gl" style="left:185.75px;top:114.20px">Kunde; Projektmanager</span>
<div class="bar" style="left:170.55px;top:139.15px;width:12.50px"></div>
<span class="gl" style="right:241.50px;top:140.10px">Nutzungsszenarien</span>
<span class="gl" style="left:197.75px;top:140.10px">Kunde; Produktmanager</span>
<div class="bar" style="left:182.55px;top:158.55px;width:23.70px"></div>
<span class="gl" style="right:219.00px;top:159.50px">Vergleichsanalyse</span>
<span class="gl" style="left:220.75px;top:159.50px">Produktmanager</span>
<div class="bar" style="left:205.75px;top:177.95px;width:12.30px"></div>
<span class="gl" style="right:206.00px;top:178.90px">Technische Spezifikationen</span>
<span class="gl" style="left:232.75px;top:178.90px">Entwickler; Produktmanager</span>
<div class="bar" style="left:217.75px;top:197.35px;width:47.30px"></div>
<span class="gl" style="right:184.00px;top:198.30px">Angebotserstellung</span>
<span class="gl" style="left:279.75px;top:198.30px">Projektmanager</span>
<div class="bar" style="left:264.55px;top:216.75px;width:70.70px"></div>
<span class="gl" style="right:137.00px;top:217.70px">Zeitplan erstellen</span>
<span class="gl" style="left:350.25px;top:217.70px">Projektmanager</span>
<div class="bar" style="left:335.05px;top:236.15px;width:23.20px"></div>
<span class="gl" style="right:66.50px;top:237.10px">Aufgabenliste erstellen</span>
<span class="gl" style="left:373.75px;top:237.10px">Projektmanager</span>
<div class="bar" style="left:358.25px;top:255.55px;width:38.00px;background:#bcd6f7;border-radius:3px 0 0 3px"></div>
<div class="bar" style="left:358.25px;top:255.55px;width:23.50px;border-radius:3px 0 0 3px"></div>
<span class="gl" style="right:43.50px;top:256.50px">Inhaltstabelle erstellen</span>
<span class="gl" style="right:7.00px;top:282.40px">Kommunikationswege definieren</span>
<span class="gl" style="left:340.25px;top:308.30px">Sitemap erstellen</span>
<span class="gl" style="left:301.75px;top:327.70px">Vorbereitung abgeschlossen</span>
<span class="gl" style="left:382.25px;top:392.40px">Kundenprüfung und Designauswahl</span>
<svg class="ab" style="left:370.75px;top:348.80px" width="14" height="9" viewBox="0 0 14 9"><path d="M0.8 1.2 L6 4.5 L0.8 7.8 M6.6 1.2 L12.2 4.5 L6.6 7.8" fill="none" stroke="#4378d2" stroke-width="1.1"/></svg>
<svg class="ab" style="left:370.75px;top:368.20px" width="14" height="9" viewBox="0 0 14 9"><path d="M0.8 1.2 L6 4.5 L0.8 7.8 M6.6 1.2 L12.2 4.5 L6.6 7.8" fill="none" stroke="#4378d2" stroke-width="1.1"/></svg>
<svg class="ab" style="left:370.75px;top:420.00px" width="14" height="9" viewBox="0 0 14 9"><path d="M0.8 1.2 L6 4.5 L0.8 7.8 M6.6 1.2 L12.2 4.5 L6.6 7.8" fill="none" stroke="#4378d2" stroke-width="1.1"/></svg>
<svg class="ab" style="left:370.75px;top:439.40px" width="14" height="9" viewBox="0 0 14 9"><path d="M0.8 1.2 L6 4.5 L0.8 7.8 M6.6 1.2 L12.2 4.5 L6.6 7.8" fill="none" stroke="#4378d2" stroke-width="1.1"/></svg>
<svg class="ab" style="left:370.75px;top:465.30px" width="14" height="9" viewBox="0 0 14 9"><path d="M0.8 1.2 L6 4.5 L0.8 7.8 M6.6 1.2 L12.2 4.5 L6.6 7.8" fill="none" stroke="#4378d2" stroke-width="1.1"/></svg>
<svg class="ab" style="left:370.75px;top:491.20px" width="14" height="9" viewBox="0 0 14 9"><path d="M0.8 1.2 L6 4.5 L0.8 7.8 M6.6 1.2 L12.2 4.5 L6.6 7.8" fill="none" stroke="#4378d2" stroke-width="1.1"/></svg>
<svg class="ab" style="left:370.75px;top:510.60px" width="14" height="9" viewBox="0 0 14 9"><path d="M0.8 1.2 L6 4.5 L0.8 7.8 M6.6 1.2 L12.2 4.5 L6.6 7.8" fill="none" stroke="#4378d2" stroke-width="1.1"/></svg>
<svg class="ab" style="left:370.75px;top:530.00px" width="14" height="9" viewBox="0 0 14 9"><path d="M0.8 1.2 L6 4.5 L0.8 7.8 M6.6 1.2 L12.2 4.5 L6.6 7.8" fill="none" stroke="#4378d2" stroke-width="1.1"/></svg>
<svg class="ab" style="left:370.75px;top:549.40px" width="14" height="9" viewBox="0 0 14 9"><path d="M0.8 1.2 L6 4.5 L0.8 7.8 M6.6 1.2 L12.2 4.5 L6.6 7.8" fill="none" stroke="#4378d2" stroke-width="1.1"/></svg>
<svg class="ab" style="left:370.75px;top:568.80px" width="14" height="9" viewBox="0 0 14 9"><path d="M0.8 1.2 L6 4.5 L0.8 7.8 M6.6 1.2 L12.2 4.5 L6.6 7.8" fill="none" stroke="#4378d2" stroke-width="1.1"/></svg>
<svg class="ab" style="left:370.75px;top:588.20px" width="14" height="9" viewBox="0 0 14 9"><path d="M0.8 1.2 L6 4.5 L0.8 7.8 M6.6 1.2 L12.2 4.5 L6.6 7.8" fill="none" stroke="#4378d2" stroke-width="1.1"/></svg>
<svg class="ab" style="left:370.75px;top:607.60px" width="14" height="9" viewBox="0 0 14 9"><path d="M0.8 1.2 L6 4.5 L0.8 7.8 M6.6 1.2 L12.2 4.5 L6.6 7.8" fill="none" stroke="#4378d2" stroke-width="1.1"/></svg>
<svg class="ab" style="left:370.75px;top:627.00px" width="14" height="9" viewBox="0 0 14 9"><path d="M0.8 1.2 L6 4.5 L0.8 7.8 M6.6 1.2 L12.2 4.5 L6.6 7.8" fill="none" stroke="#4378d2" stroke-width="1.1"/></svg>
<svg class="ab" style="left:370.75px;top:646.40px" width="14" height="9" viewBox="0 0 14 9"><path d="M0.8 1.2 L6 4.5 L0.8 7.8 M6.6 1.2 L12.2 4.5 L6.6 7.8" fill="none" stroke="#4378d2" stroke-width="1.1"/></svg>
<svg class="ab" style="left:370.75px;top:665.80px" width="14" height="9" viewBox="0 0 14 9"><path d="M0.8 1.2 L6 4.5 L0.8 7.8 M6.6 1.2 L12.2 4.5 L6.6 7.8" fill="none" stroke="#4378d2" stroke-width="1.1"/></svg>
<svg class="ab" style="left:0;top:0" width="396" height="670" viewBox="0 0 396 670"><path d="M165.75 87.50 L171.75 87.50 Q174.25 87.50 174.25 90.00 L174.25 100.50 Q174.25 103.00 171.75 103.00 L151.25 103.00 Q148.75 103.00 148.75 105.50 L148.75 117.00 Q148.75 119.50 151.25 119.50 L155.75 119.50" fill="none" stroke="#909090" stroke-width="0.75"/><path d="M159.05 119.50 l-3.2 -1.8 v3.6z" fill="#222"/><path d="M171.25 119.50 L177.25 119.50 Q179.75 119.50 179.75 122.00 L179.75 133.50 Q179.75 136.00 177.25 136.00 L162.75 136.00 Q160.25 136.00 160.25 138.50 L160.25 143.30 Q160.25 145.80 162.75 145.80 L167.25 145.80" fill="none" stroke="#909090" stroke-width="0.75"/><path d="M170.45 145.80 l-3.2 -1.8 v3.6z" fill="#222"/><path d="M183.05 145.80 L188.75 145.80 Q191.25 145.80 191.25 148.30 L191.25 155.00" fill="none" stroke="#909090" stroke-width="0.75"/><path d="M191.25 158.20 l-1.8 -3.2 h3.6z" fill="#222"/><path d="M206.25 164.80 L211.75 164.80 Q214.25 164.80 214.25 167.30 L214.25 172.50 Q214.25 175.00 211.75 175.00 L198.25 175.00 Q195.75 175.00 195.75 177.50 L195.75 181.80 Q195.75 184.30 198.25 184.30 L202.25 184.30" fill="none" stroke="#909090" stroke-width="0.75"/><path d="M205.65 184.30 l-3.2 -1.8 v3.6z" fill="#222"/><path d="M218.05 184.30 L223.75 184.30 Q226.25 184.30 226.25 186.80 L226.25 194.00" fill="none" stroke="#909090" stroke-width="0.75"/><path d="M226.25 197.40 l-1.8 -3.2 h3.6z" fill="#222"/><path d="M265.05 204.00 L270.75 204.00 Q273.25 204.00 273.25 206.50 L273.25 213.50" fill="none" stroke="#909090" stroke-width="0.75"/><path d="M273.25 217.00 l-1.8 -3.2 h3.6z" fill="#222"/><path d="M335.25 223.30 L341.25 223.30 Q343.75 223.30 343.75 225.80 L343.75 233.00" fill="none" stroke="#909090" stroke-width="0.75"/><path d="M343.75 236.40 l-1.8 -3.2 h3.6z" fill="#222"/><path d="M358.25 242.80 L364.25 242.80 Q366.75 242.80 366.75 245.30 L366.75 252.50" fill="none" stroke="#909090" stroke-width="0.75"/><path d="M366.75 256.00 l-1.8 -3.2 h3.6z" fill="#222"/></svg>
 </div>
 <div class="gsep"></div>
</div>
<!-- RIGHT PANEL -->
<div class="panel">
 <div class="ibar"><div class="selx"></div>
  <svg class="ab" style="left:-0.2px;top:0" width="246" height="31" viewBox="0 0 246 31" fill="none" stroke="#fff" stroke-linecap="round" stroke-linejoin="round">
   <!-- clipboard -->
   <rect x="13.6" y="9.8" width="12.6" height="14" rx="0.8" stroke="#e8e6e6" stroke-width="1.1"/>
   <path d="M16.8 11 V9.4 H18.6 Q19.9 6.6 21.2 9.4 H23 V11Z" fill="#e8e6e6" stroke="#e8e6e6" stroke-width="0.6"/>
   <rect x="15.6" y="13" width="8.6" height="8.6" fill="#f0eeee" stroke="none"/>
   <path d="M17.3 17.2 L19.3 19.4 L23 14.4" stroke="#57514f" stroke-width="1.4"/>
   <!-- link -->
   <g stroke="#f0eeee" stroke-width="1.6" transform="rotate(-45 61.5 15.8)"><rect x="52.6" y="12.8" width="10.4" height="6" rx="3"/><rect x="60" y="12.8" width="10.4" height="6" rx="3"/></g>
   <!-- costs -->
   <g stroke="#f0eeee" stroke-width="1.5"><path d="M98 9.5 H106.5 M97 13 H105 M96.5 16.5 H103.5 M96 20 H102 M95.5 23.3 H102"/></g>
   <circle cx="108" cy="20.6" r="4.2" fill="#f0eeee" stroke="none"/><path d="M109.4 19 C108.6 18.2 106.8 18.4 106.8 19.6 C106.8 21 109.4 20.4 109.4 21.8 C109.4 23 107.4 23 106.6 22.2 M108.1 17.6 V23.8" stroke="#686264" stroke-width="0.8"/>
   <!-- progress -->
   <path d="M145.6 9.2 A7.2 7.2 0 1 1 139.6 12" stroke="#f0eeee" stroke-width="1.5"/><path d="M144.6 5.8 L148.6 9 L144.6 12.2Z" fill="#f0eeee" stroke="none"/>
   <text x="145.6" y="19.6" font-family="Liberation Sans" font-size="8" font-weight="700" fill="#f0eeee" stroke="none" text-anchor="middle">%</text>
   <!-- list -->
   <g fill="#f0eeee" stroke="none"><rect x="178.5" y="8.2" width="10.8" height="3.4" rx="1.2"/><rect x="178.5" y="14" width="10.8" height="3.4" rx="1.2"/><rect x="178.5" y="19.8" width="10.8" height="3.4" rx="1.2"/><path d="M190.6 8.2 h1.6 l2 1.7 l-2 1.7 h-1.6z M190.6 14 h1.6 l2 1.7 l-2 1.7 h-1.6z M190.6 19.8 h1.6 l2 1.7 l-2 1.7 h-1.6z"/></g>
   <!-- pencil box -->
   <rect x="220" y="8" width="15.6" height="15.6" rx="1" fill="#f4f3f3" stroke="none"/>
   <path d="M222.4 21.2 L223.3 17.7 L230.6 10.4 L233.2 13 L225.9 20.3 Z" fill="#7d797a" stroke="none"/>
  </svg>
 </div>
 <div class="tabs"><div style="left:0;width:123.5px;background:#8c8889;color:#f2f0f0;letter-spacing:-0.13px">Kommentare</div><div style="left:123.5px;width:122.5px">Notizen</div></div>

 <div class="card" style="top:69.7px;height:91.5px">
  <div class="av"><svg width="28" height="28.7" viewBox="0 0 28 28.7"><defs><filter id="bl" x="-20%" y="-20%" width="140%" height="140%"><feGaussianBlur stdDeviation="1"/></filter></defs><rect width="28" height="28.7" fill="#dcdccb"/><g filter="url(#bl)"><rect x="-2" y="-2" width="7" height="9" fill="#4a4734"/><rect x="6" y="-2" width="12" height="9" fill="#ecebe2"/><rect x="20" y="-1" width="9" height="16" fill="#f2f0ec"/><rect x="-1" y="9" width="6" height="12" fill="#b9c597"/><rect x="19" y="14" width="10" height="16" fill="#a8ba7e"/><path d="M1 30 C2 20 3.5 6 12.3 5.5 C20 6 20.5 19 23 30Z" fill="#3a2127"/><ellipse cx="12.5" cy="15" rx="4.9" ry="6" fill="#dca596"/><ellipse cx="12.6" cy="18.2" rx="1.8" ry="0.7" fill="#c9696f"/><ellipse cx="14" cy="27.5" rx="4.2" ry="3.6" fill="#e274b5"/><ellipse cx="3" cy="28" rx="3.6" ry="3" fill="#dfa2ac"/></g></svg></div>
  <div class="nm">Produktmanager</div><div class="dt">22.09.20, 01:30</div>
  <div class="bd"><div class="l">Der Kunde hat das mit den Nutzungsszenarien</div><div class="l">nicht richtig verstanden und möchte jetzt im</div><div class="l">zweiten Anlauf ein besseres Dokument liefern.</div><div class="l">Dafür braucht er aber sicher noch zwei Tage.</div></div>
 </div>
 <div class="card" style="top:168.2px;height:69.4px">
  <div class="av"><svg width="28" height="28.7" viewBox="0 0 28 28.7"><rect width="28" height="28.7" fill="#eceaee"/><g filter="url(#bl)"><path d="M5 29 L9 23 L14 20 L20 16.5 L29 22 V30Z" fill="#2f7192"/><path d="M12 21.5 L15 19.5 L17 23 L17.5 29 H14.5Z" fill="#e3c3b4"/><path d="M12 21.5 L13.2 21 L16 29 H14Z" fill="#1b2836"/><ellipse cx="14.3" cy="13.6" rx="5.2" ry="6.6" fill="#d9a896" transform="rotate(-8 14.3 13.6)"/><path d="M7.4 9.5 C7.5 4.5 12 3.6 15 4 C19 4.6 20.8 7.5 20 12.5 C18.8 9 17 7.6 13.5 7.8 C10.6 8 8.8 8.6 7.4 9.5Z" fill="#4b3d35"/><ellipse cx="12" cy="12.6" rx="1.2" ry="0.6" fill="#5a3d35"/><ellipse cx="16.3" cy="12.2" rx="1.2" ry="0.6" fill="#5a3d35"/></g></svg></div>
  <div class="nm">Entwickler</div><div class="dt">22.09.20, 01:42</div>
  <div class="bd"><div class="l">Das habe ich mir schon gedacht <svg width="10.8" height="10.8" viewBox="0 0 10 10" style="vertical-align:-2px;margin:0 1.2px 0 1.6px"><circle cx="5" cy="5" r="4.8" fill="#f7c948"/><path d="M2.4 4 Q3.2 3.2 4 4 M6 4 Q6.8 3.2 7.6 4" stroke="#6b4a10" stroke-width="0.8" fill="none"/><path d="M3 6.4 Q5 7.8 7 6.2" stroke="#6b4a10" stroke-width="0.8" fill="none"/></svg>. Der erste</div><div class="l">Versuch war nicht sehr zielführend.</div></div>
 </div>
 <div class="card" style="top:244.5px;height:80px">
  <div class="av"><svg width="28" height="28.7" viewBox="0 0 28 28.7"><rect width="28" height="28.7" fill="#f1f0f3"/><g filter="url(#bl)"><path d="M1.5 29 C1 16 5 6.5 13.5 6.5 C21.5 6.5 24.5 15 23.8 26 L22 29Z" fill="#1b1214"/><path d="M18 29 L20 24.5 L27 27.5 V29Z" fill="#8e8a72"/><ellipse cx="13.8" cy="19.6" rx="6.2" ry="8" fill="#b26d42"/><ellipse cx="13.8" cy="13.4" rx="4.6" ry="2.6" fill="#8a4a36"/><path d="M8.6 17.6 H19" stroke="#4a2a20" stroke-width="1.1"/><ellipse cx="14.4" cy="24.2" rx="2.4" ry="1.3" fill="#f6ece8"/><ellipse cx="14.3" cy="27.8" rx="4" ry="1.8" fill="#c98b68"/></g></svg></div>
  <div class="nm">Designer</div><div class="dt">22.09.20, 02:06</div>
  <div class="bd"><div class="l">Hey <b>Projektmanager</b>, kannst du dem Kunden nicht</div><div class="l">das Dokument vom letzten Mal senden? Das war</div><div class="l">super ausgearbeitet!</div></div>
 </div>
 <div class="card" style="top:332px;height:58px">
  <div class="av"><svg width="28" height="28.7" viewBox="0 0 28 28.7"><rect width="28" height="28.7" fill="#d8d5d0"/><g filter="url(#bl)"><rect x="13.5" y="-1" width="5" height="31" fill="#edebe7"/><rect x="22" y="-1" width="7" height="31" fill="#cfccc4"/><path d="M3.5 29 C3 17 6 7.5 12.8 7.5 C19.5 7.5 22 16 23.5 29Z" fill="#3b2a2b"/><ellipse cx="4.6" cy="24.5" rx="2" ry="4" fill="#c9b1b2"/><ellipse cx="12.4" cy="17.6" rx="4.2" ry="5.7" fill="#d9a791"/><ellipse cx="12.2" cy="20.6" rx="1.6" ry="0.6" fill="#b8626a"/><path d="M6 29 L8 26 L12 25 L17 25.5 L22 29Z" fill="#37302f"/><ellipse cx="13" cy="27.8" rx="2.2" ry="1.2" fill="#b9b1a4"/></g></svg></div>
  <div class="nm">Projektmanager</div><div class="dt">22.09.20, 02:48</div>
  <div class="bd"><div class="l">Nein <b>Designer</b>, das ist leider unter NDA!</div></div>
 </div>
 <div class="btn" style="left:10.25px;top:643.2px;width:202.75px;height:25.5px;line-height:27.4px;font-size:10px;letter-spacing:-0.05px">Neuer Kommentar</div>
 <div class="btn" style="left:220.25px;top:643.2px;width:36.75px;height:25.5px">
  <svg class="ab" style="left:7px;top:5.5px" width="24" height="14" viewBox="0 0 24 14" fill="none" stroke="#e8e6e6"><circle cx="7" cy="7" r="5.2" stroke-width="0.9"/><circle cx="4.6" cy="7" r="0.7" fill="#e8e6e6" stroke="none"/><circle cx="7" cy="7" r="0.7" fill="#e8e6e6" stroke="none"/><circle cx="9.4" cy="7" r="0.7" fill="#e8e6e6" stroke="none"/><path d="M15.4 5.8 L17.6 8 L19.8 5.8" stroke-width="1"/></svg>
 </div>
</div>
<!-- NOTIFICATION WINDOW -->
<div class="nwin">
 <div class="ntop">
  <div class="ab" style="left:3.8px;top:4.6px;width:7.6px;height:7.6px;border-radius:50%;background:#ee5f57"></div>
  <div class="ab" style="left:16.8px;top:4.6px;width:7.6px;height:7.6px;border-radius:50%;background:#f6b73e"></div>
  <div class="ab" style="left:29.8px;top:4.6px;width:7.6px;height:7.6px;border-radius:50%;background:#35c34a"></div>
  <div class="ab" style="left:0;top:1.3px;width:465px;text-align:center;font-size:10.3px;color:#4a4647">Notifikationen</div>
  <div class="seg"><div class="on"></div>
   <span style="left:4px">Kommentare</span><span style="left:71px">Planung</span><i style="left:112.5px"></i><span style="left:117.5px">Import</span><i style="left:151px"></i><span style="left:156.5px">Export</span><i style="left:191px"></i><span style="left:196.5px">Veröffentlichen</span>
  </div>
 </div>
 <div class="nchk">
  <div class="ab" style="left:8.8px;top:9px;width:8.6px;height:8.6px;border-radius:2px;background:#fff;box-shadow:0 0 0 0.5px rgba(0,0,0,0.18)"></div>
  <span class="ab" style="left:22px;top:8.3px;white-space:nowrap;color:#3a3637">Dieses Fenster öffnen, wenn neue Kommentare auftreten</span>
  <svg class="ab" style="left:446px;top:8px" width="11" height="11" viewBox="0 0 11 11" fill="none" stroke="#c9c4c5" stroke-width="0.9"><path d="M7.6 1.9 A4 4 0 1 0 9.4 5.4"/><path d="M5.6 0.4 L7.9 1.9 L5.9 3.6"/></svg>
 </div>
 <div class="nhd"><i style="left:25px"></i><span style="left:30px;top:4.3px">Quelle</span><i style="left:150.2px"></i><span style="left:155px;top:4.3px">Autor</span><i style="left:260.3px"></i><span style="left:266px;top:4.3px">Kommentar</span></div>
 <div class="nrow">
  <div class="ab" style="left:8.2px;top:106.5px;width:7.6px;height:7.6px;border-radius:50%;background:#1e82f2"></div>
  <span style="left:30px;top:105.3px">Nutzungsszenarien</span><span style="left:155px;top:105.3px">Designer</span>
  <div class="ab" style="left:266px;top:94.7px;white-space:nowrap"><div class="nl">Hey Projektmanager, kannst du dem</div><div class="nl">Kunden nicht das Dokument vom letzten</div><div class="nl">Mal senden? Das war super ausgearbeitet!</div></div>
  <div class="ab" style="left:8.2px;top:134px;width:7.6px;height:7.6px;border-radius:50%;background:#1e82f2"></div>
  <span style="left:30px;top:132.4px">Nutzungsszenarien</span><span style="left:155px;top:132.4px">Projektmanager</span>
  <span style="left:266px;top:132.4px">Nein Designer, das ist leider unter NDA!</span>
 </div>
</div>
</div>
</body></html>
